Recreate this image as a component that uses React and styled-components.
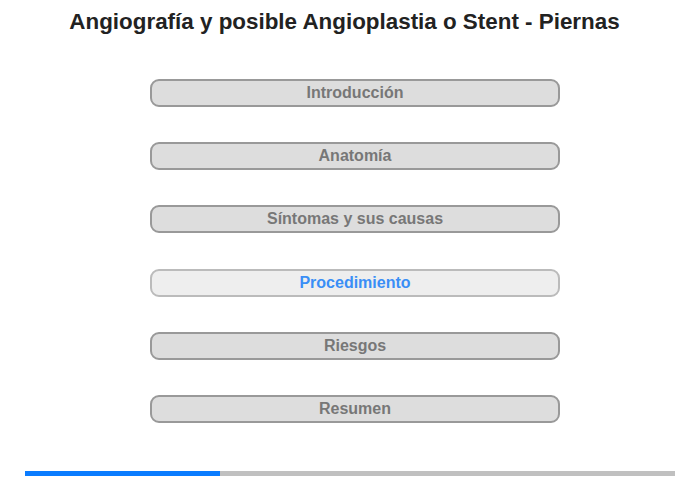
import React from "react";
import styled, { createGlobalStyle } from "styled-components";

const sections = [
  "Introducción",
  "Anatomía",
  "Síntomas y sus causas",
  "Procedimiento",
  "Riesgos",
  "Resumen",
];

const GlobalStyle = createGlobalStyle`
  body {
    margin: 0;
    background: #ffffff;
    font-family: "Liberation Sans", Arial, sans-serif;
  }
`;

const Page = styled.div`
  width: 700px;
  height: 480px;
  display: flex;
  flex-direction: column;
  overflow: hidden;
`;

const Title = styled.h1`
  margin: 0;
  padding-top: 9px;
  height: 37px;
  text-align: center;
  font-size: 22.4px;
  font-weight: bold;
  color: #222222;
  padding-right: 11px;
`;

const Menu = styled.div`
  display: flex;
  flex-direction: column;
  gap: 35.2px;
  padding: 33px 0 0 150px;
`;

const Chapter = styled.div`
  box-sizing: border-box;
  width: 410px;
  height: 28px;
  border: 2px solid ${(p) => (p.$active ? "#bbbbbb" : "#999999")};
  border-radius: 9px;
  background: ${(p) => (p.$active ? "#eeeeee" : "#dddddd")};
  color: ${(p) => (p.$active ? "#3a8ef6" : "#777777")};
  font-size: 16px;
  font-weight: bold;
  display: flex;
  align-items: center;
  justify-content: center;
  cursor: pointer;
`;

const Progress = styled.div`
  margin: auto 25px 4px;
  height: 5px;
  background: #c0c0c0;
  display: flex;
`;

const ProgressFill = styled.div`
  height: 100%;
  background: #0a7cff;
`;

export default function App() {
  const current = 3;
  const pct = (195 / 650) * 100;

  return (
    <>
      <GlobalStyle />
      <Page>
        <Title>Angiografía y posible Angioplastia o Stent - Piernas</Title>
        <Menu>
          {sections.map((s, i) => (
            <Chapter key={s} $active={i === current}>
              {s}
            </Chapter>
          ))}
        </Menu>
        <Progress>
          <ProgressFill style={{ width: `${pct}%` }} />
        </Progress>
      </Page>
    </>
  );
}
